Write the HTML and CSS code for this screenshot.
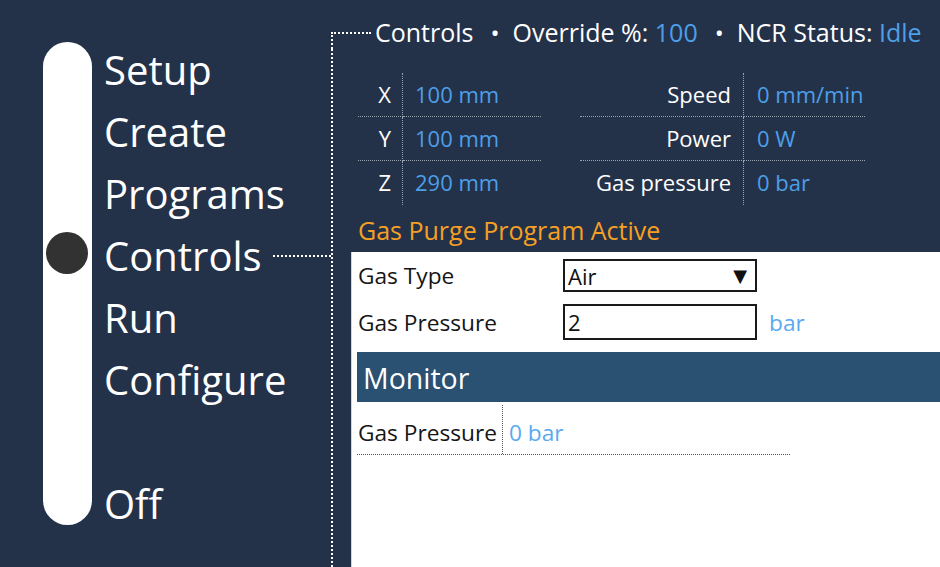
FILE: index.html
```html
<!DOCTYPE html>
<html>
<head>
<meta charset="utf-8">
<link rel="stylesheet" href="styles.css">
</head>
<body>
<div class="app">
  <nav class="sidebar">
    <div class="track"><div class="knob"></div></div>
    <ul class="menu">
      <li class="item">Setup</li>
      <li class="item">Create</li>
      <li class="item">Programs</li>
      <li class="item active">Controls</li>
      <li class="item">Run</li>
      <li class="item">Configure</li>
      <li class="item spacer"></li>
      <li class="item">Off</li>
    </ul>
  </nav>
  <main class="main">
    <header class="head">
      <span>Controls</span>
      <span class="dot">•</span>
      <span>Override %: <span class="val">100</span></span>
      <span class="dot">•</span>
      <span>NCR Status: <span class="val">Idle</span></span>
    </header>
    <section class="body">
      <div class="stats">
        <div class="grid grid-left">
          <div class="lbl">X</div><div class="val cell">100 mm</div>
          <div class="lbl">Y</div><div class="val cell">100 mm</div>
          <div class="lbl last">Z</div><div class="val cell last">290 mm</div>
        </div>
        <div class="grid grid-right">
          <div class="lbl">Speed</div><div class="val cell">0 mm/min</div>
          <div class="lbl">Power</div><div class="val cell">0 W</div>
          <div class="lbl last">Gas pressure</div><div class="val cell last">0 bar</div>
        </div>
      </div>
      <div class="notice">Gas Purge Program Active</div>
      <div class="panel">
        <div class="form-row">
          <div class="flabel">Gas Type</div>
          <div class="select"><span>Air</span><span class="arrow">▼</span></div>
        </div>
        <div class="form-row row2">
          <div class="flabel">Gas Pressure</div>
          <div class="input">2</div>
          <div class="unit">bar</div>
        </div>
        <div class="monitor">Monitor</div>
        <div class="mon-row">
          <div class="mlabel">Gas Pressure</div>
          <div class="mval">0 bar</div>
        </div>
      </div>
    </section>
  </main>
</div>
</body>
</html>
```

FILE: styles.css
```css
html, body {
  margin: 0;
  padding: 0;
  height: 100%;
  overflow: hidden;
}
body {
  background: #243249;
  font-family: "Open Sans", "Noto Sans", sans-serif;
  color: #fff;
}
.app {
  display: flex;
  height: 567px;
}
.sidebar {
  width: 331px;
  flex: none;
  display: flex;
  gap: 12px;
  padding: 39px 0 0 43px;
  box-sizing: border-box;
}
.track {
  width: 49px;
  height: 483px;
  margin-top: 3px;
  background: #fff;
  border-radius: 25px;
  position: relative;
  flex: none;
}
.knob {
  position: absolute;
  left: 3px;
  top: 190px;
  width: 42px;
  height: 42px;
  border-radius: 50%;
  background: #323232;
}
.menu {
  list-style: none;
  margin: 0;
  padding: 0;
  flex: 1;
  display: flex;
  flex-direction: column;
}
.item {
  height: 62px;
  line-height: 62px;
  font-size: 40px;
  white-space: nowrap;
}
.item.active {
  display: flex;
  align-items: center;
}
.item.active::after {
  content: "";
  flex: 1;
  margin-left: 11px;
  border-top: 2px dotted #fff;
}
.main {
  flex: 1;
  display: flex;
  flex-direction: column;
  min-width: 0;
}
.head {
  display: flex;
  align-items: center;
  height: 34px;
  margin-top: 15px;
  font-size: 25px;
  white-space: nowrap;
}
.head::before {
  content: "";
  align-self: stretch;
  margin-top: 17px;
  width: 38px;
  border-top: 2px dotted #fff;
  border-left: 2px dotted #fff;
  margin-right: 4px;
}
.head .dot {
  margin: 0 13px 0 17px;
  font-size: 24px;
}
.val {
  color: #4c9fe8;
}
.body {
  flex: 1;
  border-left: 2px dotted #fff;
  display: flex;
  flex-direction: column;
}
.stats {
  display: flex;
  gap: 39px;
  padding-left: 25px;
  margin-top: 24px;
}
.grid {
  display: grid;
  font-size: 22px;
}
.grid-left {
  grid-template-columns: 45px 138px;
}
.grid-right {
  grid-template-columns: 164px 121px;
}
.lbl, .cell {
  height: 44px;
  line-height: 42px;
  border-bottom: 1px dotted #9aa3b0;
  box-sizing: border-box;
  white-space: nowrap;
}
.lbl {
  text-align: right;
  padding-right: 11px;
  border-right: 1px dotted #9aa3b0;
}
.grid-right .lbl {
  padding-right: 12px;
}
.cell {
  padding-left: 12px;
}
.grid-right .cell {
  padding-left: 13px;
}
.lbl.last, .cell.last {
  border-bottom: none;
}
.notice {
  margin: 7px 0 0 25px;
  height: 36px;
  line-height: 36px;
  font-size: 25px;
  color: #f5a024;
}
.panel {
  flex: 1;
  margin: 4px 0 0 18px;
  background: #fff;
  border-left: 1px solid #cfd5dc;
  padding: 7px 0 0 5px;
  color: #151515;
  font-size: 22.7px;
}
.form-row {
  display: flex;
  align-items: center;
}
.row2 {
  margin-top: 12px;
}
.flabel {
  width: 206px;
  flex: none;
  padding-left: 1px;
  box-sizing: border-box;
}
.select, .input {
  width: 194px;
  box-sizing: border-box;
  border: 2px solid #1a1a1a;
  display: flex;
  align-items: center;
  padding-left: 3px;
  color: #111;
  font-size: 22px;
}
.select {
  height: 33px;
  justify-content: space-between;
  padding-right: 8px;
}
.arrow {
  font-family: "DejaVu Sans", sans-serif;
  font-size: 18px;
}
.input {
  height: 36px;
}
.unit {
  margin-left: 12px;
  color: #5aa9f0;
}
.monitor {
  margin-top: 12px;
  height: 50px;
  line-height: 52px;
  background: #2a5072;
  color: #fff;
  font-size: 28.5px;
  padding-left: 6px;
}
.mon-row {
  display: flex;
  width: 433px;
  height: 50px;
  margin-top: 3px;
  border-bottom: 1px dotted #555;
  box-sizing: border-box;
}
.mlabel {
  width: 146px;
  flex: none;
  box-sizing: border-box;
  padding: 12px 0 0 1px;
  border-right: 1px dotted #555;
  white-space: nowrap;
}
.mval {
  padding: 12px 0 0 6px;
  color: #5aa9f0;
}
```
